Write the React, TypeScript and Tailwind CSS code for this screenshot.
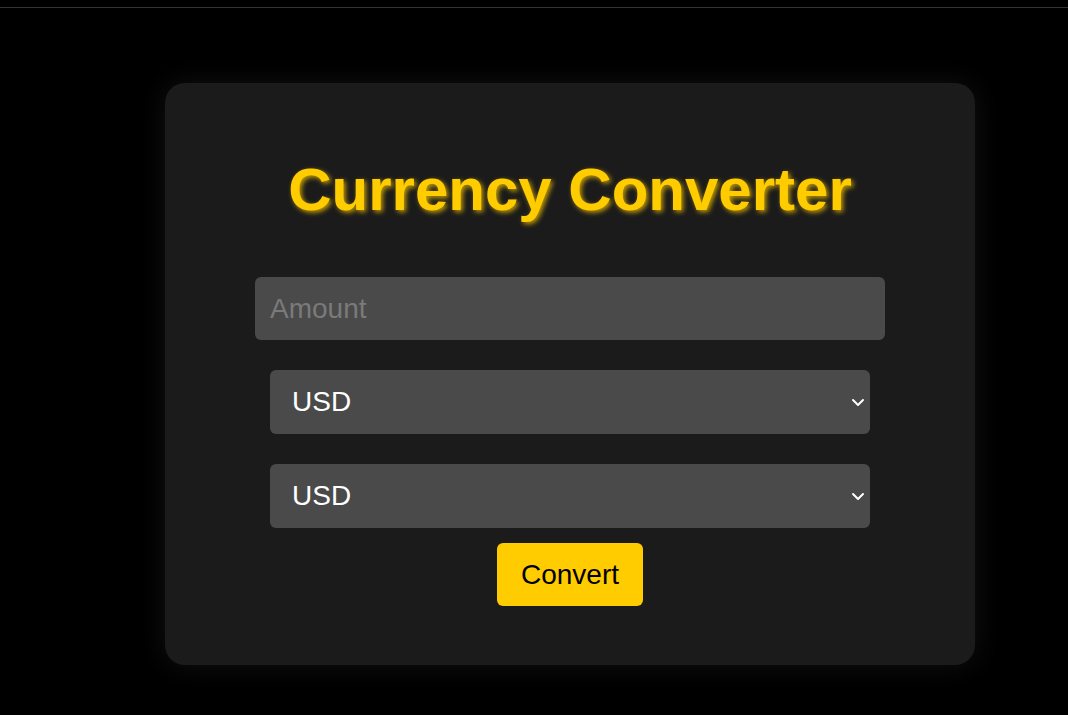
import { useState } from 'react';

const currencies = ['USD', 'EUR', 'GBP', 'INR', 'JPY'];

function CurrencySelect({ value, onChange }: { value: string; onChange: (v: string) => void }) {
  return (
    <div className="relative w-[600px]">
      <select
        value={value}
        onChange={(e) => onChange(e.target.value)}
        className="h-[64px] w-full appearance-none rounded-[6px] bg-[#4a4a4a] pl-[22px] text-[28px] text-white outline-none"
      >
        {currencies.map((c) => (
          <option key={c} value={c}>
            {c}
          </option>
        ))}
      </select>
      <svg
        className="pointer-events-none absolute right-[5px] top-[28px]"
        width="14"
        height="9"
        viewBox="0 0 14 9"
        fill="none"
      >
        <path d="M2 2l5 5 5-5" stroke="white" strokeWidth="2" strokeLinecap="round" strokeLinejoin="round" />
      </svg>
    </div>
  );
}

export default function App() {
  const [amount, setAmount] = useState('');
  const [from, setFrom] = useState('USD');
  const [to, setTo] = useState('USD');

  return (
    <div className="min-h-screen bg-black pt-[7px] font-['Liberation_Sans',Arial,sans-serif]">
      <div className="border-t border-[#333333]" />
      <div className="ml-[165px] mt-[75px] flex w-[810px] flex-col items-center rounded-[20px] bg-[#1b1b1b] pb-[59px] pt-[73px] shadow-[0_0_28px_rgba(255,255,255,0.07)]">
        <h1 className="text-[60px] font-bold leading-[67px] text-[#ffcc00] [text-shadow:2px_2px_5px_rgba(255,204,0,0.75)]">
          Currency Converter
        </h1>

        <input
          type="number"
          value={amount}
          onChange={(e) => setAmount(e.target.value)}
          placeholder="Amount"
          className="mt-[54px] h-[63px] w-[630px] rounded-[6px] bg-[#4a4a4a] px-[15px] text-[28px] text-white outline-none placeholder:text-[#7a7a7a]"
        />

        <div className="mt-[30px]">
          <CurrencySelect value={from} onChange={setFrom} />
        </div>
        <div className="mt-[30px]">
          <CurrencySelect value={to} onChange={setTo} />
        </div>

        <button className="mt-[15px] h-[63px] w-[146px] rounded-[6px] bg-[#ffcc00] text-[28px] text-black">
          Convert
        </button>
      </div>
    </div>
  );
}
